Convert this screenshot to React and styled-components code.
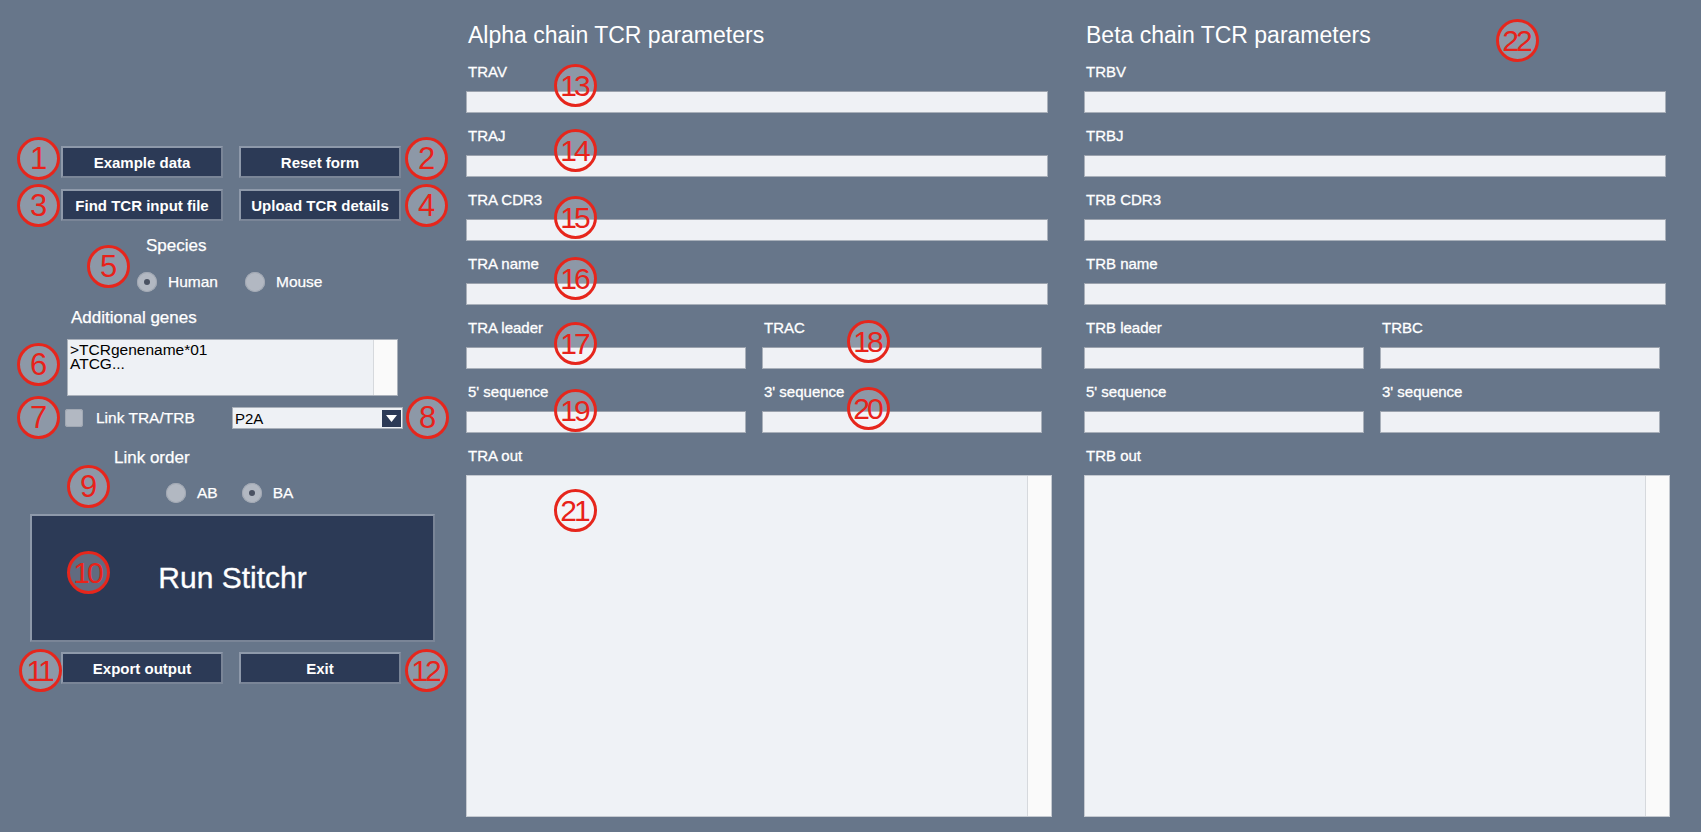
import React from 'react';
import styled, { createGlobalStyle } from 'styled-components';

const GlobalStyle = createGlobalStyle`
  html, body {
    margin: 0;
    padding: 0;
    background: #67768a;
  }

  body {
    font-family: "Liberation Sans", Arial, sans-serif;
  }
`;

const MARKERS = [
  { n: 1, x: 38, y: 158 },
  { n: 2, x: 426, y: 158 },
  { n: 3, x: 38, y: 205 },
  { n: 4, x: 426, y: 205 },
  { n: 5, x: 108, y: 266 },
  { n: 6, x: 38, y: 364 },
  { n: 7, x: 38, y: 417 },
  { n: 8, x: 427, y: 417 },
  { n: 9, x: 88, y: 486 },
  { n: 10, x: 88, y: 572 },
  { n: 11, x: 40, y: 670 },
  { n: 12, x: 426, y: 670 },
  { n: 13, x: 575, y: 85 },
  { n: 14, x: 575, y: 150 },
  { n: 15, x: 575, y: 217 },
  { n: 16, x: 575, y: 278 },
  { n: 17, x: 575, y: 343 },
  { n: 18, x: 868, y: 341 },
  { n: 19, x: 575, y: 410 },
  { n: 20, x: 868, y: 408 },
  { n: 21, x: 575, y: 510 },
  { n: 22, x: 1517, y: 40 },
];

const CHAINS = [
  {
    title: 'Alpha chain TCR parameters',
    short: 'TRA',
    fields: ['TRAV', 'TRAJ', 'TRA CDR3', 'TRA name'],
    constant: 'TRAC',
  },
  {
    title: 'Beta chain TCR parameters',
    short: 'TRB',
    fields: ['TRBV', 'TRBJ', 'TRB CDR3', 'TRB name'],
    constant: 'TRBC',
  },
];

function Radio({ label, checked }) {
  return (
    <RadioOption>
      <RadioDot $checked={checked} />
      <span>{label}</span>
    </RadioOption>
  );
}

function ChainColumn({ chain }) {
  return (
    <Column>
      <ChainTitle>{chain.title}</ChainTitle>
      <FieldStack>
        {chain.fields.map((name) => (
          <Field key={name}>
            <FieldLabel>{name}</FieldLabel>
            <TextInput />
          </Field>
        ))}
        <HalfRow>
          <Field>
            <FieldLabel>{chain.short} leader</FieldLabel>
            <TextInput $half />
          </Field>
          <Field>
            <FieldLabel>{chain.constant}</FieldLabel>
            <TextInput $half />
          </Field>
        </HalfRow>
        <HalfRow>
          <Field>
            <FieldLabel>5' sequence</FieldLabel>
            <TextInput $half />
          </Field>
          <Field>
            <FieldLabel>3' sequence</FieldLabel>
            <TextInput $half />
          </Field>
        </HalfRow>
        <Field>
          <FieldLabel>{chain.short} out</FieldLabel>
          <OutBox>
            <OutText />
            <ScrollTrack />
          </OutBox>
        </Field>
      </FieldStack>
    </Column>
  );
}

export default function App() {
  return (
    <>
      <GlobalStyle />
      <Page>
        <Sidebar>
          <ButtonGrid>
            <ActionButton>Example data</ActionButton>
            <ActionButton>Reset form</ActionButton>
            <ActionButton>Find TCR input file</ActionButton>
            <ActionButton>Upload TCR details</ActionButton>
          </ButtonGrid>

          <SectionTitle $left={146} $top={15}>Species</SectionTitle>
          <RadioRow $left={137} $top={16} $gap={27}>
            <Radio label="Human" checked />
            <Radio label="Mouse" />
          </RadioRow>

          <SectionTitle $left={71} $top={16}>Additional genes</SectionTitle>
          <GeneBox>
            <GeneText>{'>TCRgenename*01\nATCG...'}</GeneText>
            <ScrollTrack />
          </GeneBox>

          <LinkRow>
            <CheckBox />
            <LinkLabel>Link TRA/TRB</LinkLabel>
            <Dropdown>
              <DropValue>P2A</DropValue>
              <DropArrow>
                <svg width="11" height="7" viewBox="0 0 11 7">
                  <path d="M0 0h11L5.5 7z" fill="#fff" />
                </svg>
              </DropArrow>
            </Dropdown>
          </LinkRow>

          <SectionTitle $left={114} $top={19}>Link order</SectionTitle>
          <RadioRow $left={166} $top={15} $gap={24}>
            <Radio label="AB" />
            <Radio label="BA" checked />
          </RadioRow>

          <RunButton>Run Stitchr</RunButton>

          <ButtonGrid $top={10}>
            <ActionButton>Export output</ActionButton>
            <ActionButton>Exit</ActionButton>
          </ButtonGrid>
        </Sidebar>

        {CHAINS.map((chain) => (
          <ChainColumn key={chain.short} chain={chain} />
        ))}

        {MARKERS.map((m) => (
          <Marker key={m.n} $x={m.x} $y={m.y} $double={m.n > 9}>
            {m.n}
          </Marker>
        ))}
      </Page>
    </>
  );
}

const Page = styled.main`
  position: relative;
  display: flex;
  width: 1701px;
  height: 832px;
  padding-top: 22px;
  box-sizing: border-box;
  background: #67768a;
  color: #fff;
  overflow: hidden;
`;

const Sidebar = styled.aside`
  width: 466px;
  flex-shrink: 0;
  display: flex;
  flex-direction: column;
  align-items: flex-start;
  padding-top: 124px;
  box-sizing: border-box;
`;

const ButtonGrid = styled.div`
  display: grid;
  grid-template-columns: 162px 162px;
  column-gap: 16px;
  row-gap: 11px;
  margin: ${(p) => p.$top || 0}px 0 0 61px;
`;

const ActionButton = styled.button`
  height: 32px;
  padding: 0;
  box-sizing: border-box;
  background: #2c3a56;
  border: 2px solid;
  border-color: #8e99aa #7a8597 #7a8597 #8e99aa;
  color: #fff;
  font-family: "Liberation Sans", Arial, sans-serif;
  font-size: 15px;
  font-weight: bold;
  cursor: pointer;
`;

const SectionTitle = styled.div`
  margin: ${(p) => p.$top}px 0 0 ${(p) => p.$left}px;
  font-size: 17px;
  line-height: 20px;
  color: #fff;
  -webkit-text-stroke: 0.25px #fff;
`;

const RadioRow = styled.div`
  display: flex;
  align-items: center;
  gap: ${(p) => p.$gap}px;
  height: 20px;
  margin: ${(p) => p.$top}px 0 0 ${(p) => p.$left}px;
`;

const RadioOption = styled.label`
  display: flex;
  align-items: center;
  gap: 11px;
  font-size: 15.5px;
  color: #fff;
  -webkit-text-stroke: 0.25px #fff;
`;

const RadioDot = styled.span`
  position: relative;
  width: 20px;
  height: 20px;
  border-radius: 50%;
  background: #b2b8c2;
  box-shadow: inset 0 0 0 1px #a1a8b3;

  &::after {
    content: '';
    position: absolute;
    left: 7px;
    top: 7px;
    width: 6px;
    height: 6px;
    border-radius: 50%;
    background: #4a5262;
    display: ${(p) => (p.$checked ? 'block' : 'none')};
  }
`;

const GeneBox = styled.div`
  display: flex;
  width: 331px;
  height: 57px;
  margin: 11px 0 0 67px;
  box-sizing: border-box;
  background: #eef1f5;
  border: 1px solid #aab1bb;
`;

const GeneText = styled.div`
  flex: 1;
  padding: 3px 2px;
  white-space: pre-line;
  color: #000;
  font-size: 15.5px;
  line-height: 14px;
`;

const ScrollTrack = styled.div`
  width: 23px;
  flex-shrink: 0;
  background: #fafafa;
  border-left: 1px solid #d6d9dd;
`;

const LinkRow = styled.div`
  display: flex;
  align-items: center;
  width: 338px;
  height: 22px;
  margin: 11px 0 0 65px;
`;

const CheckBox = styled.span`
  width: 18px;
  height: 18px;
  border-radius: 3px;
  background: #b2b8c2;
  box-shadow: inset 0 0 0 1px #a1a8b3;
`;

const LinkLabel = styled.span`
  margin-left: 13px;
  font-size: 15.5px;
  color: #fff;
  -webkit-text-stroke: 0.25px #fff;
`;

const Dropdown = styled.div`
  display: flex;
  align-items: center;
  justify-content: space-between;
  width: 171px;
  height: 22px;
  margin-left: auto;
  box-sizing: border-box;
  background: #eef1f5;
  border: 1px solid #a9b0ba;
`;

const DropValue = styled.span`
  padding-left: 2px;
  color: #000;
  font-size: 15px;
`;

const DropArrow = styled.span`
  display: flex;
  align-items: center;
  justify-content: center;
  width: 19px;
  height: 17px;
  margin-right: 1px;
  background: #2c3a56;
`;

const RunButton = styled.button`
  width: 405px;
  height: 128px;
  margin: 11px 0 0 30px;
  padding: 0;
  box-sizing: border-box;
  background: #2c3a56;
  border: 2px solid;
  border-color: #8e99aa #7a8597 #7a8597 #8e99aa;
  color: #fff;
  font-family: "Liberation Sans", Arial, sans-serif;
  font-size: 30px;
  -webkit-text-stroke: 0.3px #fff;
  cursor: pointer;
`;

const Column = styled.section`
  width: 586px;
  flex-shrink: 0;
  display: flex;
  flex-direction: column;

  & + & {
    margin-left: 32px;
  }
`;

const ChainTitle = styled.h2`
  margin: 0 0 15px 2px;
  font-size: 23px;
  font-weight: normal;
  line-height: 26px;
  color: #fff;
`;

const FieldStack = styled.div`
  display: flex;
  flex-direction: column;
  gap: 14px;
`;

const Field = styled.div`
  display: flex;
  flex-direction: column;
  gap: 11px;
`;

const FieldLabel = styled.label`
  padding-left: 2px;
  font-size: 15px;
  line-height: 17px;
  color: #fff;
  -webkit-text-stroke: 0.3px #fff;
`;

const HalfRow = styled.div`
  display: grid;
  grid-template-columns: 280px 280px;
  column-gap: 16px;
`;

const TextInput = styled.input`
  width: ${(p) => (p.$half ? 280 : 582)}px;
  height: 22px;
  margin: 0;
  padding: 0 3px;
  box-sizing: border-box;
  background: #eff1f5;
  border: 1px solid #a9b0ba;
  border-top-color: #9ba2ad;
  outline: none;
  font-family: "Liberation Sans", Arial, sans-serif;
  font-size: 14px;
`;

const OutBox = styled.div`
  display: flex;
  width: 586px;
  height: 342px;
  box-sizing: border-box;
  border: 1px solid #c4c9d0;
`;

const OutText = styled.div`
  flex: 1;
  background: #eff2f6;
`;

const Marker = styled.span`
  position: absolute;
  left: ${(p) => p.$x - 21}px;
  top: ${(p) => p.$y - 21}px;
  width: 43px;
  height: 43px;
  box-sizing: border-box;
  border: 3px solid #e6261c;
  border-radius: 50%;
  background: rgba(255, 255, 255, 0.25);
  color: #e8221a;
  font-size: ${(p) => (p.$double ? 30 : 31)}px;
  line-height: 37px;
  letter-spacing: ${(p) => (p.$double ? '-3px' : '0')};
  text-align: center;
  text-indent: ${(p) => (p.$double ? '-3px' : '0')};
  pointer-events: none;
`;
